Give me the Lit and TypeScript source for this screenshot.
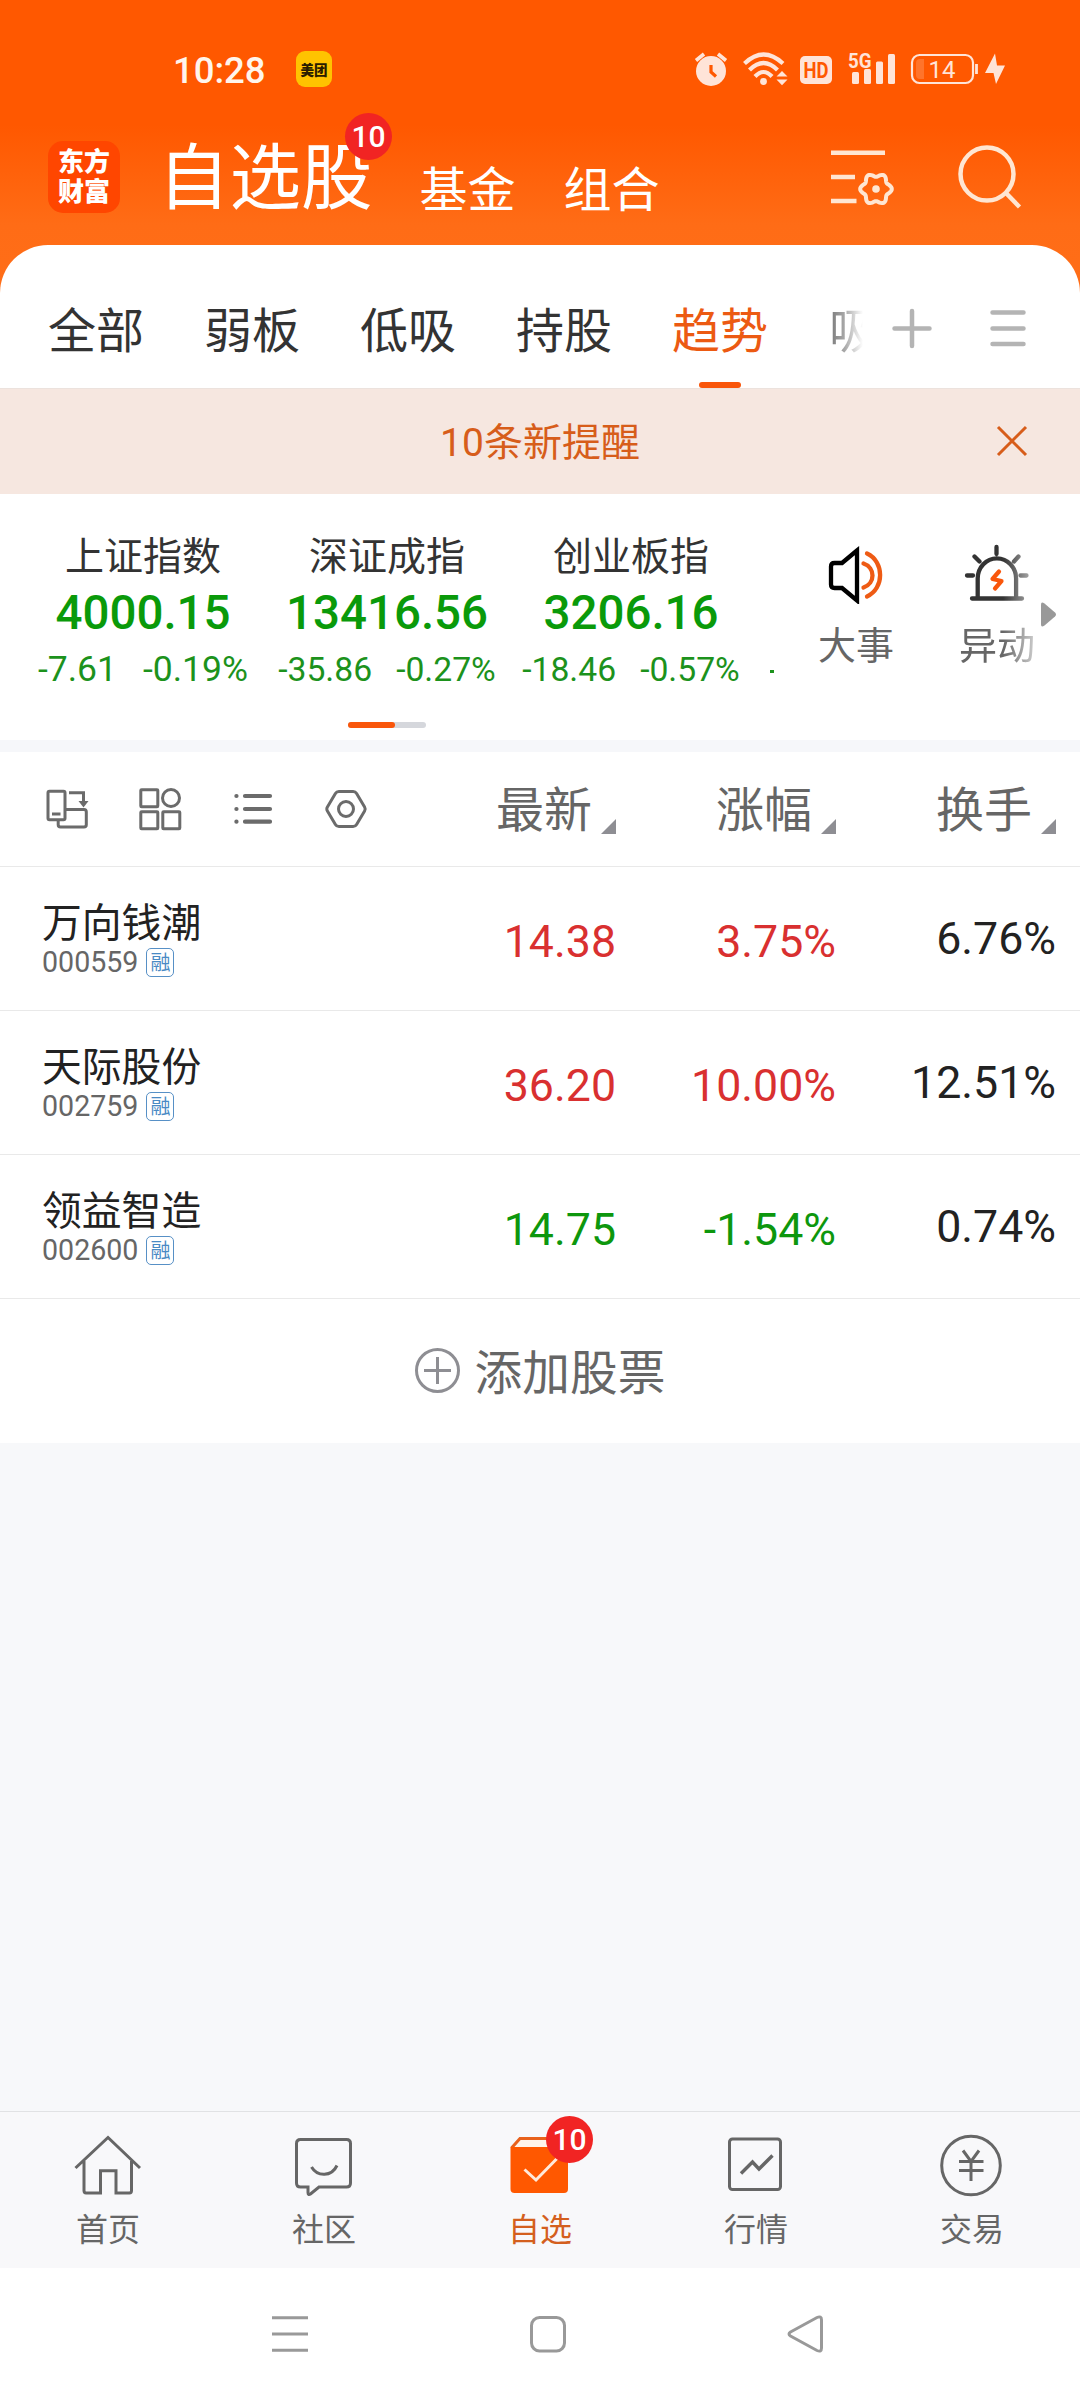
import { LitElement, html, css, svg } from 'lit';
import { customElement } from 'lit/decorators.js';
import { classMap } from 'lit/directives/class-map.js';

interface IndexQuote { name: string; value: string; change: string; percent: string; large?: boolean }
interface Stock { name: string; code: string; price: string; percent: string; turnover: string; up: boolean }

const GROUPS = ['全部', '弱板', '低吸', '持股', '趋势'];
const INDICES: IndexQuote[] = [
  { name: '上证指数', value: '4000.15', change: '-7.61', percent: '-0.19%', large: true },
  { name: '深证成指', value: '13416.56', change: '-35.86', percent: '-0.27%' },
  { name: '创业板指', value: '3206.16', change: '-18.46', percent: '-0.57%' },
];
const STOCKS: Stock[] = [
  { name: '万向钱潮', code: '000559', price: '14.38', percent: '3.75%', turnover: '6.76%', up: true },
  { name: '天际股份', code: '002759', price: '36.20', percent: '10.00%', turnover: '12.51%', up: true },
  { name: '领益智造', code: '002600', price: '14.75', percent: '-1.54%', turnover: '0.74%', up: false },
];
const COLUMNS = ['最新', '涨幅', '换手'];

/** Closed six-lobed outline of a gear around (cx, cy). */
function gearPath(cx: number, cy: number, r: number, lobe: number): string {
  const points: string[] = [];
  for (let i = 0; i < 96; i++) {
    const a = (i / 96) * Math.PI * 2;
    const d = r + lobe * Math.cos(6 * a);
    points.push(`${(cx + d * Math.cos(a)).toFixed(2)} ${(cy + d * Math.sin(a)).toFixed(2)}`);
  }
  return `M${points.join('L')}Z`;
}

@customElement('status-bar')
class StatusBar extends LitElement {
  static styles = css`
    :host { display: flex; align-items: center; height: 136px; padding: 2px 74px 0 173px; box-sizing: border-box; color: #fff5ec; font-family: Roboto, "Noto Sans CJK SC", sans-serif; }
    .time { font-size: 36.500px; font-weight: 500; line-height: 40px; width: 123px; padding-top: 3px; }
    .app { width: 36px; height: 36px; border-radius: 9px; background: #ffc300; color: #2a1c00; font-size: 13.5px; font-weight: 900; line-height: 38px; text-align: center; }
    .icons { margin-left: auto; display: block; }
    .hd { font: 700 22px Roboto, sans-serif; fill: #ff5800; }
    .net { font: 700 21px Roboto, sans-serif; fill: #ffe4d8; }
    .level { font: 400 24px Roboto, sans-serif; fill: #ffe4d8; }
  `;
  render() {
    return html`
      <span class="time">10:28</span>
      <span class="app">美团</span>
      <svg class="icons" width="312" height="40" viewBox="694 49 312 40" fill="none" stroke="#ffe4d8">
        <circle cx="711" cy="71" r="15" fill="#ffe4d8" stroke="none" />
        <path d="M696 60.5 704 54M718 54l8 6.500" stroke-width="3.6" />
        <path d="M711 65v7l5 4.500" stroke="#ff5800" stroke-width="3.2" />
        <path d="M744.500 63.500q19-18 38.500 0M749.500 70q14-14 28 0M755 76.500q8.500-9 17 0" stroke-width="4.200" />
        <circle cx="763.500" cy="81.500" r="3.400" fill="#ffe4d8" stroke="none" />
        <path d="M776.500 76.500 782 71l5.500 5.500zM776.500 79.500 782 85.300l5.500-5.800z" fill="#ffe4d8" stroke="none" />
        <rect x="800" y="56" width="32" height="28" rx="5" fill="#ffe4d8" stroke="none" />
        <text class="hd" x="803.500" y="78" textLength="25" lengthAdjust="spacingAndGlyphs" stroke="none">HD</text>
        <text class="net" x="848" y="67.500" textLength="23.500" lengthAdjust="spacingAndGlyphs" stroke="none">5G</text>
        <g fill="#ffe4d8" stroke="none">
          <rect x="852" y="72" width="7" height="12" rx="1.500" /><rect x="864" y="69" width="7" height="15" rx="1.500" />
          <rect x="876" y="61.500" width="7" height="22.500" rx="1.500" /><rect x="888" y="54" width="7" height="30" rx="1.500" />
        </g>
        <rect x="912" y="55" width="61" height="28" rx="7.500" stroke-width="2.200" />
        <path d="M924 59v20h-4q-4 0-4-4V63q0-4 4-4z" fill="#ffe4d8" fill-opacity=".2" stroke="none" />
        <path d="M976.500 64v10" stroke-width="2.800" />
        <text class="level" x="928.500" y="78" stroke="none">14</text>
        <path d="M995 53.500 985 73h8.500L996 84l9-18.500h-8z" fill="#ffe4d8" stroke="none" />
      </svg>`;
  }
}

@customElement('title-bar')
class TitleBar extends LitElement {
  static styles = css`
    :host { display: flex; align-items: flex-start; height: 109px; padding: 5px 58px 0 48px; box-sizing: border-box; color: #fff; font-family: Roboto, "Noto Sans CJK SC", sans-serif; }
    .logo { width: 72px; height: 72px; box-sizing: border-box; padding-top: 6px; border-radius: 15px; background: #ff4600; font-size: 26px; line-height: 30px; font-weight: 900; text-align: center; }
    .title { position: relative; margin: 2px 0 0 38px; font-size: 71.500px; line-height: 72px; }
    .badge { position: absolute; left: 187px; top: -30px; width: 47px; height: 47px; border-radius: 50%; background: #f12423; font-size: 30px; line-height: 48px; font-weight: 500; text-align: center; }
    .link { margin-left: 48px; margin-top: 26px; font-size: 48px; line-height: 48px; }
    .first { margin-left: 47px; }
    .tools { margin-left: auto; display: block; }
  `;
  render() {
    return html`
      <div class="logo">东方<br />财富</div>
      <div class="title">自选股<span class="badge">10</span></div>
      <div class="link first">基金</div>
      <div class="link">组合</div>
      <svg class="tools" width="192" height="70" viewBox="830 141 192 70" fill="none" stroke="#ffe6d2" stroke-width="4.500">
        <path d="M831 152.800h54M831 177h24M831 201h25.500" />
        <path d=${gearPath(876, 189, 14, 1.8)} stroke-width="4" />
        <circle cx="876" cy="189" r="3.800" fill="#ffe6d2" stroke="none" />
        <circle cx="987" cy="174" r="26.500" />
        <path d="M1005.500 192.500l14 14.500" />
      </svg>`;
  }
}

@customElement('group-tabs')
class GroupTabs extends LitElement {
  static styles = css`
    :host { display: flex; height: 143px; box-sizing: border-box; padding-left: 48px; border-radius: 48px 48px 0 0; background: #fff; color: #333; font-family: Roboto, "Noto Sans CJK SC", sans-serif; }
    .tabs { display: flex; gap: 60px; width: 816px; overflow: hidden; white-space: nowrap; }
    .tab { display: flex; flex-direction: column; align-items: center; justify-content: space-between; flex: none; padding-top: 62px; font-size: 48px; line-height: 50px; }
    .active { color: #ec5a12; }
    .active::after { content: ''; width: 42px; height: 6px; border-radius: 3px; background: #f9560b; }
    .fading { margin-left: 1px; background: linear-gradient(90deg, #777 0, #aaa 16px, #fff 34px); background-clip: text; -webkit-background-clip: text; color: transparent; }
    .tools { display: block; margin: 62px 0 0 26px; }
  `;
  render() {
    return html`
      <div class="tabs">
        ${GROUPS.map(name => html`<div class=${classMap({ tab: true, active: name === '趋势' })}><span>${name}</span></div>`)}
        <div class="tab"><span class="fading">吸</span></div>
      </div>
      <svg class="tools" width="140" height="44" viewBox="890 307 140 44" fill="none" stroke="#b4b4b4" stroke-width="4.500" stroke-linecap="round">
        <path d="M912 311v35M894.500 328.500h35M992.500 312.500h31M992.500 328.500h31M992.500 344h31" />
      </svg>`;
  }
}

@customElement('alert-banner')
class AlertBanner extends LitElement {
  static styles = css`
    :host { display: grid; grid-template-columns: 1fr auto 1fr; align-items: center; height: 106px; box-sizing: border-box; padding-right: 52px; padding-left: 52px; border-top: 1px solid #ece2dd; background: #f6e7e0; color: #d75d1a; font-family: Roboto, "Noto Sans CJK SC", sans-serif; }
    .text { grid-column: 2; font-size: 39px; line-height: 44px; padding-top: 2px; }
    .close { justify-self: end; display: block; margin-bottom: 2px; }
  `;
  render() {
    return html`
      <span class="text">10条新提醒</span>
      <svg class="close" width="32" height="32" viewBox="0 0 32 32" fill="none" stroke="#d75d1a" stroke-width="3"><path d="M2 2l28 28M30 2 2 30" /></svg>`;
  }
}

@customElement('index-strip')
class IndexStrip extends LitElement {
  static styles = css`
    :host { display: flex; flex-direction: column; height: 246px; box-sizing: border-box; padding-top: 37px; background: #fff; font-family: Roboto, "Noto Sans CJK SC", sans-serif; }
    .row { display: flex; height: 191px; }
    .quotes { display: flex; width: 774px; box-sizing: border-box; padding-left: 21px; overflow: hidden; }
    .quote { flex: none; width: 244px; display: flex; flex-direction: column; align-items: center; color: #0a9a0a; }
    .name { font-size: 39px; line-height: 52px; color: #333; }
    .value { font-size: 47.500px; line-height: 60px; font-weight: 500; }
    .moves { display: flex; gap: 24px; font-size: 33.700px; line-height: 44px; margin-top: 5px; color: #1c921c; white-space: nowrap; }
    .large { font-size: 35.500px; gap: 26px; margin-top: 4px; }
    .next { width: 4px; height: 2.500px; margin: 139px 0 0 17px; background: #1c921c; flex: none; }
    .shortcuts { display: flex; padding: 11px 0 0 45px; color: #666; }
    .shortcut { width: 74px; display: flex; flex-direction: column; align-items: center; font-size: 38px; line-height: 44px; white-space: nowrap; gap: 20px; }
    .siren { margin-left: 67px; -webkit-mask-image: linear-gradient(90deg, #000 58%, rgba(0, 0, 0, .35) 100%); mask-image: linear-gradient(90deg, #000 58%, rgba(0, 0, 0, .35) 100%); }
    .more { width: 15px; height: 25px; margin: 60px 0 0 7px; }
    .pager { display: block; width: 78px; height: 6px; margin: 0 0 0 348px; border-radius: 3px; background: #d5d7dc; }
    .thumb { width: 47px; height: 6px; border-radius: 3px; background: #f9560b; }
  `;
  render() {
    return html`
      <div class="row">
        <div class="quotes">
          ${INDICES.map(q => html`
            <div class="quote">
              <span class="name">${q.name}</span>
              <span class="value">${q.value}</span>
              <span class=${classMap({ moves: true, large: !!q.large })}><span>${q.change}</span><span>${q.percent}</span></span>
            </div>`)}
          <span class="next"></span>
        </div>
        <div class="shortcuts">
          <div class="shortcut">
            <svg width="60" height="62" viewBox="826 542 60 62" fill="none" stroke-width="4.300">
              <path d="M857 550.500 842 563h-7.500q-3.500 0-3.500 3.500v18q0 3.500 3.500 3.500h7.500l15 12.500z" stroke="#000" stroke-linejoin="miter" />
              <path d="M863.500 563.500c12 4 12 20 0 24M867 553.500c17.500 8 17.500 35 0 43" stroke="#ee5b14" stroke-linecap="round" />
            </svg>
            <span>大事</span>
          </div>
          <div class="shortcut siren">
            <svg width="70" height="62" viewBox="962 542 70 62" fill="none" stroke="#333" stroke-width="4.300" stroke-linecap="round">
              <path d="M977.700 597v-18.500a19.200 20.200 0 0 1 38.400 0V597M972 598.500h50M996.500 547v7M974.500 556.500l5 5M1018.500 556.500l-4.500 5M967 575.500h6M1020.500 575.500h6" />
              <path d="M999 571.500l-6.500 7.500 9 2-6.500 7.500" stroke="#f9560b" stroke-width="4.200" stroke-linejoin="round" />
            </svg>
            <span>异动</span>
          </div>
          <svg class="more" viewBox="0 0 15 25"><path d="M0 2.500Q0-1 3.500 1.500L14 10.500q2 2 0 4L3.500 23.500Q0 26 0 22.500z" fill="#999" /></svg>
        </div>
      </div>
      <div class="pager"><div class="thumb"></div></div>`;
  }
}

@customElement('stock-table')
class StockTable extends LitElement {
  static styles = css`
    :host { display: block; background: #fff; font-family: Roboto, "Noto Sans CJK SC", sans-serif; }
    .head, .row { display: grid; grid-template-columns: 1fr 220px 220px 220px; padding-right: 24px; box-sizing: border-box; border-bottom: 1px solid #e9e9e9; }
    .head { height: 115px; color: #666; }
    .views { display: block; margin: 35px 0 0 44px; }
    .label { display: flex; justify-content: flex-end; font-size: 48px; line-height: 56px; padding-top: 31px; gap: 9px; }
    .corner { width: 15px; height: 15px; margin-top: 36px; background: #8e8e93; clip-path: polygon(100% 0, 100% 100%, 0 100%); }
    .row { height: 144px; }
    .who { padding: 32px 0 0 42px; }
    .name { font-size: 39.800px; line-height: 50px; color: #222; }
    .meta { display: flex; align-items: center; gap: 8px; height: 30px; margin-top: -2px; font-size: 28.600px; line-height: 30px; color: #666; }
    .tag { width: 28px; height: 29px; box-sizing: border-box; border: 1.500px solid #5790c6; border-radius: 5px; color: #4a8ac4; font-size: 20px; line-height: 28px; text-align: center; display: flex; justify-content: center; }
    .num { font-size: 44.700px; line-height: 60px; padding-top: 45px; text-align: right; color: #222; }
    .up { color: #d93030; }
    .down { color: #0d970d; }
    .last { padding-top: 42px; }
    .add { display: flex; align-items: center; justify-content: center; gap: 15px; height: 144px; font-size: 47.700px; line-height: 56px; color: #666; box-sizing: border-box; }
    .plus { margin-bottom: 2px; }
    .addtext { padding-top: 5px; }
  `;
  render() {
    return html`
      <div class="head">
        <svg class="views" width="326" height="46" viewBox="44 787 326 46" fill="none" stroke="#6b6b6b" stroke-width="3">
          <rect x="48" y="791.300" width="17" height="28.500" rx="1.500" />
          <path d="M52 814h8.500M66 809.500h18q2.300 0 2.300 2.300v13q0 2.300-2.300 2.300H60.500q-2.300 0-2.300-2.300V820M69 792.700h14.500V802" />
          <path d="M78.500 801h10l-5 6.500z" fill="#6b6b6b" stroke="none" />
          <rect x="140.800" y="789.800" width="17" height="17" rx=".8" /><circle cx="171" cy="798" r="8.500" />
          <rect x="140.800" y="811.800" width="17" height="17" rx=".8" /><rect x="162.800" y="811.800" width="17" height="17" rx=".8" />
          <path d="M245 796h25M245 809h25M245 821.700h25M236.400 796h.1M236.400 809h.1M236.400 821.700h.1" stroke-width="4.200" stroke-linecap="round" />
          <path d="M326.800 809q0-1 .6-2l8-13.500q1.200-2 3.500-2h14.200q2.300 0 3.500 2l8 13.500q1.200 2 0 4l-8 13.500q-1.200 2-3.500 2h-14.200q-2.300 0-3.500-2l-8-13.500q-.6-1-.6-2z" /><circle cx="346" cy="809" r="7.500" />
        </svg>
        ${COLUMNS.map(c => html`<div class="label"><span>${c}</span><i class="corner"></i></div>`)}
      </div>
      ${STOCKS.map(s => html`
        <div class="row">
          <div class="who">
            <div class="name">${s.name}</div>
            <div class="meta"><span>${s.code}</span><span class="tag">融</span></div>
          </div>
          <div class=${classMap({ num: true, up: s.up, down: !s.up })}>${s.price}</div>
          <div class=${classMap({ num: true, up: s.up, down: !s.up })}>${s.percent}</div>
          <div class="num last">${s.turnover}</div>
        </div>`)}
      <div class="add">
        <svg class="plus" width="45" height="45" viewBox="0 0 45 45" fill="none" stroke="#8e8e93" stroke-width="3"><circle cx="22.500" cy="22.500" r="21" /><path d="M22.500 9v27M9 22.500h27" /></svg>
        <span class="addtext">添加股票</span>
      </div>`;
  }
}

const NAV = [
  { label: '首页', icon: svg`<path d="M3.500 36 36 5.500 68 36M12 29v29.500q0 2.500 2 2.500h14.500V38.800h15.500V61H57.500q2 0 2-2.500V29" />` },
  { label: '社区', icon: svg`<path d="M12.500 7.500h46q4 0 4 4v39.500q0 4-4 4H31l-8.500 7q-2.500 1.500-2.500-1.500V55h-7.500q-4 0-4-4V11.500q0-4 4-4zM23.500 35c6 10 20 10 25.500-1.500" />` },
  { label: '自选', icon: svg`<path d="M7.500 16 16 6.500h43l6 9.500" stroke="#e8611c" fill="#fff3ea" /><path d="M6.500 15h57.500V57q0 4-4 4H10.500q-4 0-4-4z" fill="#ff5800" stroke="none" /><path d="M20.500 37.500 32 48 53 26.500" stroke="#ffe9da" />` },
  { label: '行情', icon: svg`<rect x="9.500" y="7" width="51" height="50.500" rx="3" /><path d="M21 41.500 32.500 30 39 37 52.500 23.500" stroke-width="3.400" />` },
  { label: '交易', icon: svg`<circle cx="35" cy="33.500" r="29.300" /><path d="M27 18.500 35 29.500 43 18.500M23 29.500h24.500M23 38.500h24.500M35 29.500v19.500" />` },
];

@customElement('bottom-nav')
class BottomNav extends LitElement {
  static styles = css`
    :host { display: grid; grid-template-columns: repeat(5, 1fr); height: 157px; box-sizing: border-box; border-top: 1px solid #e1e2e4; background: #f8f8fa; font-family: Roboto, "Noto Sans CJK SC", sans-serif; }
    .item { display: flex; flex-direction: column; align-items: center; padding-top: 20px; font-size: 32px; line-height: 40px; color: #666; position: relative; gap: 12px; }
    .icon { display: block; stroke: #666; }
    .on { color: #d45f1e; }
    .badge { position: absolute; left: 114px; top: 4px; width: 47px; height: 47px; border-radius: 50%; background: #f12423; color: #fff; font-size: 30px; font-weight: 500; line-height: 48px; text-align: center; }
  `;
  render() {
    return NAV.map((n, i) => html`
      <div class=${classMap({ item: true, on: i === 2 })}>
        <svg class="icon" width="72" height="66" viewBox="0 0 72 66" fill="none" stroke-width="3">${n.icon}</svg>
        <span>${n.label}</span>
        ${i === 2 ? html`<span class="badge">10</span>` : ''}
      </div>`);
  }
}

@customElement('app-root')
class AppRoot extends LitElement {
  static styles = css`
    :host { display: block; }
    .page { display: flex; flex-direction: column; width: 1080px; height: 2400px; overflow: hidden; background: linear-gradient(180deg, #ff5800 0, #ff5800 125px, #ff6c16 225px, #ff6e18 300px); }
    .body { flex: 1; background: #f7f8fa; }
    .gap { height: 12px; background: #f6f7fa; }
    .system { display: flex; height: 132px; background: #fff; padding-left: 270px; box-sizing: border-box; }
    .keys { display: block; margin-top: 44px; }
  `;
  render() {
    return html`
      <div class="page">
        <status-bar></status-bar>
        <title-bar></title-bar>
        <group-tabs></group-tabs>
        <alert-banner></alert-banner>
        <index-strip></index-strip>
        <div class="gap"></div>
        <stock-table></stock-table>
        <div class="body"></div>
        <bottom-nav></bottom-nav>
        <div class="system">
          <svg class="keys" width="560" height="44" viewBox="270 2312 560 44" fill="none" stroke="#999" stroke-width="3">
            <path d="M272 2317.700h36M272 2334h36M272 2350.300h36" />
            <rect x="531.500" y="2317.500" width="33" height="33.500" rx="8" />
            <path d="M790.500 2332 817 2317.500q4.500-2 4.500 2.500v28q0 4.500-4.500 2.500L790.500 2336q-3-2 0-4z" />
          </svg>
        </div>
      </div>`;
  }
}
